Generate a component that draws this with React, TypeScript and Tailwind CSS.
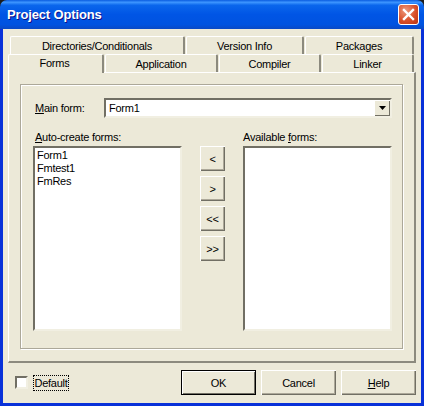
const FONT = "font-['Liberation_Sans',Arial,sans-serif]";

const sunken =
  'border-2 border-t-[#716f64] border-l-[#716f64] border-r-[#f1efe2] border-b-[#f1efe2] bg-white';
const tabEdge =
  'border-t border-l border-r-2 border-t-white border-l-white border-r-[#8c8a7e] rounded-t-[2px]';
const buttonFace =
  'bg-[#ece9d8] text-black shadow-[inset_1px_1px_0_#fff,inset_-1px_-1px_0_#716f64,inset_-2px_-2px_0_#aca899]';

const BACK_TABS = [
  { label: 'Directories/Conditionals', width: 'w-[175px]' },
  { label: 'Version Info', width: 'w-[118px]' },
  { label: 'Packages', width: 'w-[109px]' },
];

const FRONT_TABS = [
  { label: 'Application', width: 'w-[113px]' },
  { label: 'Compiler', width: 'w-[102px]' },
  { label: 'Linker', width: 'w-[92px]' },
];

const MOVE_BUTTONS = ['<', '>', '<<', '>>'];
const FORMS = ['Form1', 'Fmtest1', 'FmRes'];

function CloseButton() {
  return (
    <div className="flex h-[21px] w-[21px] items-center justify-center rounded-[3px] border border-white bg-[radial-gradient(circle_at_35%_30%,#ec9a7e,#d9502a_55%,#b83312)]">
      <svg width="13" height="13" viewBox="0 0 13 13">
        <path d="M2 2 L11 11 M11 2 L2 11" stroke="#fff" strokeWidth="2.4" strokeLinecap="square" />
      </svg>
    </div>
  );
}

function DialogButton({
  children,
  isDefault,
}: {
  children: React.ReactNode;
  isDefault?: boolean;
}) {
  return (
    <button
      className={
        isDefault
          ? 'h-[25px] w-[75px] border border-black bg-[#ece9d8] text-black shadow-[inset_1px_1px_0_#fff,inset_-1px_-1px_0_#716f64]'
          : `h-[25px] w-[75px] ${buttonFace}`
      }
    >
      {children}
    </button>
  );
}

export default function App() {
  return (
    <div className={`${FONT} flex h-[406px] w-[424px] flex-col overflow-hidden bg-[#1c1c1c] text-[11px] leading-[14px] tracking-[-0.25px] text-black`}>
      {/* Title bar */}
      <div className="flex h-[29px] shrink-0 items-center justify-between rounded-t-[7px] bg-[linear-gradient(180deg,#0a5ce0_0%,#3d95ff_8%,#0a66ec_18%,#0055e5_50%,#0053e0_85%,#0a49c4_100%)] pl-[7px] pr-[5px]">
        <span className="text-[13px] font-bold tracking-[-0.15px] text-white [text-shadow:1px_1px_0_#0f1089]">Project Options</span>
        <CloseButton />
      </div>

      <div className="flex flex-1 flex-col bg-[#0831d9] px-[3px] pb-[3px]">
        <div className="flex flex-1 flex-col bg-[#ece9d8] pl-[5px] pt-[7px]">
          {/* Tabs */}
          <div className="flex h-[18px] gap-[1px] pl-[2px]">
            {BACK_TABS.map((tab) => (
              <div key={tab.label} className={`${tab.width} ${tabEdge} flex items-center justify-center`}>
                {tab.label}
              </div>
            ))}
          </div>
          <div className="flex h-[18px]">
            <div className="relative z-10 mb-[-1px] flex h-[19px] w-[96px] items-center justify-center rounded-t-[2px] border-l border-r-2 border-t border-t-white border-l-white border-r-[#8c8a7e] bg-[#ece9d8] pb-[2px] pr-[2px]">
              Forms
            </div>
            <div className="flex gap-[1px] pl-[1px]">
              {FRONT_TABS.map((tab) => (
                <div key={tab.label} className={`${tab.width} ${tabEdge} flex items-center justify-center`}>
                  {tab.label}
                </div>
              ))}
            </div>
          </div>

          {/* Tab sheet */}
          <div className="h-[291px] w-[408px] border-b-2 border-l border-r-2 border-t border-b-[#8c8a7e] border-l-white border-r-[#8c8a7e] border-t-white px-[11px] pb-[12px] pt-[11px]">
            <div className="flex h-full flex-col border border-[#aca899] pl-[12px] pt-[13px] shadow-[inset_1px_1px_0_#fff,1px_1px_0_#fff]">
              <div className="flex h-[20px] shrink-0 items-center">
                <span className="w-[71px] shrink-0 pl-[2px]">
                  <span className="underline">M</span>ain form:
                </span>
                <div className={`${sunken} flex h-[20px] w-[288px] shrink-0 items-center justify-between`}>
                  <span className="pl-[3px]">Form1</span>
                  <div className="flex h-[16px] w-[16px] items-center justify-center bg-[#ece9d8] shadow-[inset_1px_1px_0_#fff,inset_-1px_-1px_0_#716f64]">
                    <svg width="7" height="4" viewBox="0 0 7 4">
                      <path d="M0 0 H7 L3.5 4 Z" fill="#000" />
                    </svg>
                  </div>
                </div>
              </div>

              <div className="mt-[11px] flex">
                <div className="w-[149px] shrink-0">
                  <div className="mb-[2px] h-[15px] pl-[2px] pt-[1px]">
                    <span className="underline">A</span>uto-create forms:
                  </div>
                  <div className={`${sunken} h-[185px] pl-[2px] pt-[1px] leading-[13px]`}>
                    {FORMS.map((form) => (
                      <div key={form}>{form}</div>
                    ))}
                  </div>
                </div>

                <div className="ml-[18px] flex shrink-0 flex-col gap-[5px] pt-[17px]">
                  {MOVE_BUTTONS.map((label) => (
                    <button key={label} className={`h-[25px] w-[25px] ${buttonFace}`}>
                      {label}
                    </button>
                  ))}
                </div>

                <div className="ml-[18px] w-[149px] shrink-0">
                  <div className="mb-[2px] h-[15px] pt-[1px]">
                    Available <span className="underline">f</span>orms:
                  </div>
                  <div className={`${sunken} h-[185px]`} />
                </div>
              </div>
            </div>
          </div>

          {/* Footer */}
          <div className="flex w-[408px] flex-1 items-center justify-between pb-[1px] pl-[7px]">
            <div className="flex items-center gap-[5px]">
              <div className="h-[13px] w-[13px] border-2 border-b-[#f1efe2] border-l-[#716f64] border-r-[#f1efe2] border-t-[#716f64] bg-white" />
              <span className="flex h-[16px] w-[36px] items-center justify-center border border-dotted border-black">Default</span>
            </div>
            <div className="flex gap-[5px]">
              <DialogButton isDefault>OK</DialogButton>
              <DialogButton>Cancel</DialogButton>
              <DialogButton>
                <span className="underline">H</span>elp
              </DialogButton>
            </div>
          </div>
        </div>
      </div>
    </div>
  );
}
